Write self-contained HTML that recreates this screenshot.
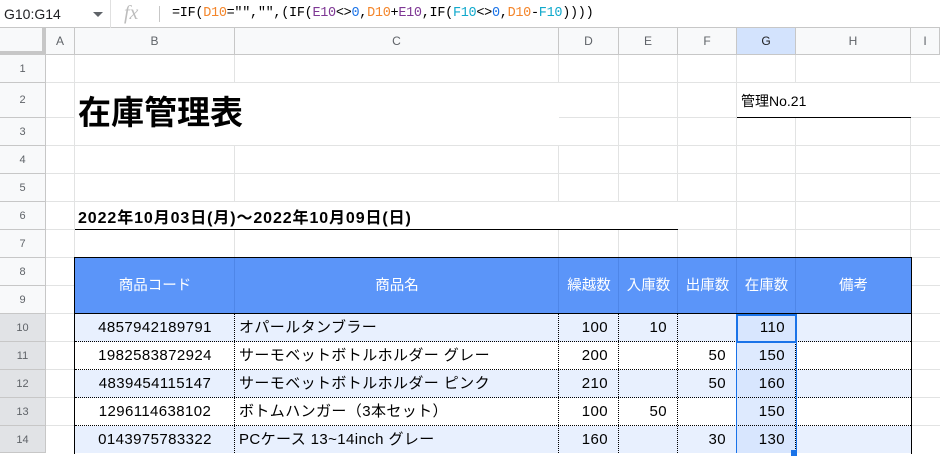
<!DOCTYPE html>
<html><head><meta charset="utf-8"><style>
*{margin:0;padding:0;box-sizing:border-box}
body{width:940px;height:453px;overflow:hidden;background:#fff;position:relative;font-family:"Liberation Sans","Noto Sans CJK JP",sans-serif;color:#000}
.a{position:absolute}
.vl{position:absolute;width:1px;background:#e2e3e3}
.hl{position:absolute;height:1px;background:#e2e3e3}
.ch{position:absolute;top:28px;height:27px;font-size:12px;color:#5f6368;text-align:center;line-height:27px;background:#f8f9fa;border-right:1px solid #c7c7c7;border-bottom:1px solid #c7c7c7}
.rh{position:absolute;left:0;width:46px;font-size:11px;color:#5f6368;text-align:center;background:#f8f9fa;border-right:1px solid #c7c7c7;border-bottom:1px solid #c7c7c7}
.c{position:absolute;font-size:15px;height:28px;line-height:28px;white-space:nowrap;padding:0 4px;letter-spacing:0.4px}
.r{text-align:right}
.h{color:#fff;font-size:14.5px;text-align:center;line-height:56px;height:56px;position:absolute;top:258px}
</style></head><body>
<div class="a" style="left:0;top:0;width:940px;height:28px;background:#fff;border-bottom:1px solid #c7c7c7"></div>
<div class="a" style="left:4px;top:6px;font-size:14px;color:#202124">G10:G14</div>
<div class="a" style="left:93px;top:12px;width:0;height:0;border-left:5px solid transparent;border-right:5px solid transparent;border-top:5px solid #5f6368"></div>
<div class="a" style="left:110px;top:0;width:1px;height:28px;background:#e0e0e0"></div>
<div class="a" style="left:124px;top:2px;font-size:20px;font-style:italic;color:#bdbdbd;font-family:'Liberation Serif',serif">fx</div>
<div class="a" style="left:159px;top:6px;width:1px;height:16px;background:#c7c7c7"></div>
<div class="a" style="left:172px;top:6px;font-size:13.5px;font-family:'Liberation Mono',monospace;color:#000;letter-spacing:-0.3px">=IF(<span style="color:#f4862b">D10</span>="","",(IF(<span style="color:#7e3794">E10</span>&lt;&gt;<span style="color:#1a73e8">0</span>,<span style="color:#f4862b">D10</span>+<span style="color:#7e3794">E10</span>,IF(<span style="color:#11a9cc">F10</span>&lt;&gt;<span style="color:#1a73e8">0</span>,<span style="color:#f4862b">D10</span>-<span style="color:#11a9cc">F10</span>))))</div>
<div class="vl" style="left:74px;top:55px;height:398px"></div>
<div class="vl" style="left:234px;top:55px;height:398px"></div>
<div class="vl" style="left:558px;top:55px;height:398px"></div>
<div class="vl" style="left:618px;top:55px;height:398px"></div>
<div class="vl" style="left:677px;top:55px;height:398px"></div>
<div class="vl" style="left:736px;top:55px;height:398px"></div>
<div class="vl" style="left:795px;top:55px;height:398px"></div>
<div class="vl" style="left:910px;top:55px;height:398px"></div>
<div class="hl" style="left:46px;top:82px;width:894px"></div>
<div class="hl" style="left:46px;top:117px;width:894px"></div>
<div class="hl" style="left:46px;top:145px;width:894px"></div>
<div class="hl" style="left:46px;top:173px;width:894px"></div>
<div class="hl" style="left:46px;top:201px;width:894px"></div>
<div class="hl" style="left:46px;top:229px;width:894px"></div>
<div class="hl" style="left:46px;top:257px;width:894px"></div>
<div class="hl" style="left:46px;top:285px;width:894px"></div>
<div class="hl" style="left:46px;top:313px;width:894px"></div>
<div class="hl" style="left:46px;top:341px;width:894px"></div>
<div class="hl" style="left:46px;top:369px;width:894px"></div>
<div class="hl" style="left:46px;top:397px;width:894px"></div>
<div class="hl" style="left:46px;top:425px;width:894px"></div>
<div class="a" style="left:75px;top:83px;width:484px;height:62px;background:#fff"></div>
<div class="a" style="left:75px;top:202px;width:603px;height:27px;background:#fff"></div>
<div class="a" style="left:737px;top:83px;width:174px;height:34px;background:#fff"></div>
<div class="ch" style="left:0;width:46px;border-right:4px solid #c7c7c7;border-bottom:4px solid #c7c7c7"></div>
<div class="ch" style="left:46px;width:29px">A</div>
<div class="ch" style="left:75px;width:160px">B</div>
<div class="ch" style="left:235px;width:324px">C</div>
<div class="ch" style="left:559px;width:60px">D</div>
<div class="ch" style="left:619px;width:59px">E</div>
<div class="ch" style="left:678px;width:59px">F</div>
<div class="ch" style="left:737px;width:59px;background:#d3e3fd;color:#202124">G</div>
<div class="ch" style="left:796px;width:115px">H</div>
<div class="ch" style="left:911px;width:29px">I</div>
<div class="rh" style="top:55px;height:28px;line-height:28px">1</div>
<div class="rh" style="top:83px;height:35px;line-height:35px">2</div>
<div class="rh" style="top:118px;height:28px;line-height:28px">3</div>
<div class="rh" style="top:146px;height:28px;line-height:28px">4</div>
<div class="rh" style="top:174px;height:28px;line-height:28px">5</div>
<div class="rh" style="top:202px;height:28px;line-height:28px">6</div>
<div class="rh" style="top:230px;height:28px;line-height:28px">7</div>
<div class="rh" style="top:258px;height:28px;line-height:28px">8</div>
<div class="rh" style="top:286px;height:28px;line-height:28px">9</div>
<div class="rh" style="top:314px;height:28px;line-height:28px;background:#e1e3e6">10</div>
<div class="rh" style="top:342px;height:28px;line-height:28px;background:#e1e3e6">11</div>
<div class="rh" style="top:370px;height:28px;line-height:28px;background:#e1e3e6">12</div>
<div class="rh" style="top:398px;height:28px;line-height:28px;background:#e1e3e6">13</div>
<div class="rh" style="top:426px;height:27px;line-height:28px;background:#e1e3e6">14</div>
<div class="a" style="left:78px;top:94px;font-size:33px;font-weight:bold;line-height:38px">在庫管理表</div>
<div class="a" style="left:741px;top:91px;font-size:14px">管理No.21</div>
<div class="a" style="left:737px;top:117px;width:174px;height:1px;background:#000"></div>
<div class="a" style="left:78px;top:204px;font-size:16px;font-weight:bold;letter-spacing:0.9px;white-space:nowrap">2022年10月03日(月)～2022年10月09日(日)</div>
<div class="a" style="left:75px;top:229px;width:603px;height:1px;background:#000"></div>
<div class="a" style="left:75px;top:314px;width:836px;height:28px;background:#e8f0fe"></div>
<div class="a" style="left:75px;top:342px;width:836px;height:28px;background:#fff"></div>
<div class="a" style="left:75px;top:370px;width:836px;height:28px;background:#e8f0fe"></div>
<div class="a" style="left:75px;top:398px;width:836px;height:28px;background:#fff"></div>
<div class="a" style="left:75px;top:426px;width:836px;height:27px;background:#e8f0fe"></div>
<div class="a" style="left:737px;top:314px;width:59px;height:139px;background:#d3e3fd;opacity:.75"></div>
<div class="a" style="left:75px;top:258px;width:836px;height:56px;background:#5b95f9"></div>
<div class="a" style="left:234px;top:258px;width:1px;height:56px;background:#4e86e8"></div>
<div class="a" style="left:558px;top:258px;width:1px;height:56px;background:#4e86e8"></div>
<div class="a" style="left:618px;top:258px;width:1px;height:56px;background:#4e86e8"></div>
<div class="a" style="left:677px;top:258px;width:1px;height:56px;background:#4e86e8"></div>
<div class="a" style="left:736px;top:258px;width:1px;height:56px;background:#4e86e8"></div>
<div class="a" style="left:795px;top:258px;width:1px;height:56px;background:#4e86e8"></div>
<div class="h" style="left:75px;width:160px">商品コード</div>
<div class="h" style="left:235px;width:324px">商品名</div>
<div class="h" style="left:559px;width:60px">繰越数</div>
<div class="h" style="left:619px;width:59px">入庫数</div>
<div class="h" style="left:678px;width:59px">出庫数</div>
<div class="h" style="left:737px;width:59px">在庫数</div>
<div class="h" style="left:796px;width:115px">備考</div>
<div class="a" style="left:75px;top:341px;width:836px;border-top:1px dotted #000"></div>
<div class="a" style="left:75px;top:369px;width:836px;border-top:1px dotted #000"></div>
<div class="a" style="left:75px;top:397px;width:836px;border-top:1px dotted #000"></div>
<div class="a" style="left:75px;top:425px;width:836px;border-top:1px dotted #000"></div>
<div class="a" style="left:234px;top:314px;height:139px;border-left:1px dotted #000"></div>
<div class="a" style="left:558px;top:314px;height:139px;border-left:1px dotted #000"></div>
<div class="a" style="left:618px;top:314px;height:139px;border-left:1px dotted #000"></div>
<div class="a" style="left:677px;top:314px;height:139px;border-left:1px dotted #000"></div>
<div class="a" style="left:736px;top:314px;height:139px;border-left:1px dotted #000"></div>
<div class="a" style="left:795px;top:314px;height:139px;border-left:1px dotted #000"></div>
<div class="a" style="left:74px;top:257px;width:838px;height:197px;border:1px solid #000;border-bottom:none"></div>
<div class="a" style="left:75px;top:313px;width:836px;height:1px;background:#000"></div>
<div class="a" style="left:736px;top:314px;width:61px;height:139px;border:1px solid #1a73e8;border-bottom:none"></div>
<div class="a" style="left:736px;top:314px;width:61px;height:29px;border:2px solid #1a73e8"></div>
<div class="a" style="left:791px;top:450px;width:6px;height:6px;background:#1a73e8"></div>
<div class="c" style="left:75px;top:314px;width:160px;text-align:center">4857942189791</div>
<div class="c" style="left:235px;top:314px">オパールタンブラー</div>
<div class="c r" style="left:559px;top:314px;width:60px;padding-right:11px">100</div>
<div class="c r" style="left:619px;top:314px;width:59px;padding-right:11px">10</div>
<div class="c r" style="left:737px;top:314px;width:59px;padding-right:11px">110</div>
<div class="c" style="left:75px;top:342px;width:160px;text-align:center">1982583872924</div>
<div class="c" style="left:235px;top:342px">サーモベットボトルホルダー グレー</div>
<div class="c r" style="left:559px;top:342px;width:60px;padding-right:11px">200</div>
<div class="c r" style="left:678px;top:342px;width:59px;padding-right:11px">50</div>
<div class="c r" style="left:737px;top:342px;width:59px;padding-right:11px">150</div>
<div class="c" style="left:75px;top:370px;width:160px;text-align:center">4839454115147</div>
<div class="c" style="left:235px;top:370px">サーモベットボトルホルダー ピンク</div>
<div class="c r" style="left:559px;top:370px;width:60px;padding-right:11px">210</div>
<div class="c r" style="left:678px;top:370px;width:59px;padding-right:11px">50</div>
<div class="c r" style="left:737px;top:370px;width:59px;padding-right:11px">160</div>
<div class="c" style="left:75px;top:398px;width:160px;text-align:center">1296114638102</div>
<div class="c" style="left:235px;top:398px">ボトムハンガー（3本セット）</div>
<div class="c r" style="left:559px;top:398px;width:60px;padding-right:11px">100</div>
<div class="c r" style="left:619px;top:398px;width:59px;padding-right:11px">50</div>
<div class="c r" style="left:737px;top:398px;width:59px;padding-right:11px">150</div>
<div class="c" style="left:75px;top:426px;width:160px;text-align:center">0143975783322</div>
<div class="c" style="left:235px;top:426px">PCケース 13~14inch グレー</div>
<div class="c r" style="left:559px;top:426px;width:60px;padding-right:11px">160</div>
<div class="c r" style="left:678px;top:426px;width:59px;padding-right:11px">30</div>
<div class="c r" style="left:737px;top:426px;width:59px;padding-right:11px">130</div>
</body></html>
